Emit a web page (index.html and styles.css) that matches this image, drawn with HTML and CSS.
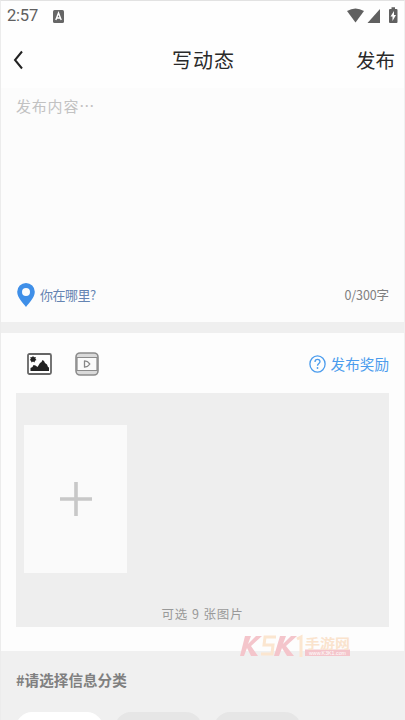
FILE: index.html
```html
<!DOCTYPE html>
<html lang="zh-CN">
<head>
<meta charset="utf-8">
<title>写动态</title>
<link rel="stylesheet" href="styles.css">
</head>
<body>
<main class="screen">
  <header class="status">
    <span class="clock">2:57</span>
    <svg class="keyboard" width="11" height="13" viewBox="0 0 11 13"><rect width="11" height="13" rx="1.5" fill="#666"/><path d="M2.8 10 5.5 3l2.7 7M3.7 8h3.6" fill="none" stroke="#fff" stroke-width="1.4"/></svg>
    <svg class="signals" width="52" height="18" viewBox="0 0 52 18"><path d="M0 4Q8.500-1 17 4L8.500 15.500Z" fill="#606060"/><path d="M20.500 16 33 2v14Z" fill="#606060"/><path d="M43 2h1.500V.3h3.500V2h1.500q1 0 1 1v12q0 1-1 1H43q-1 0-1-1V3q0-1 1-1Z" fill="#606060"/><path d="M47 4 43.500 9.500h2V14L49 8h-2Z" fill="#fff"/></svg>
  </header>
  <nav class="topbar">
    <svg class="back" width="12" height="20" viewBox="0 0 12 20"><path d="M10 1.500 3 10l7 8.500" fill="none" stroke="#222" stroke-width="2"/></svg>
    <h1 class="title">写动态</h1>
    <span class="publish">发布</span>
  </nav>
  <section class="editor">
    <p class="placeholder">发布内容<span class="dots">⋯</span></p>
    <div class="meta">
      <svg class="pin" width="18" height="24" viewBox="0 0 18 24"><path fill-rule="evenodd" d="M9 0a8.800 8.800 0 0 1 8.800 8.800C17.800 15 11.500 20.500 9 24 6.500 20.500.2 15 .2 8.800A8.800 8.800 0 0 1 9 0Zm0 5a4 4 0 1 0 0 8 4 4 0 0 0 0-8Z" fill="#3f8fe8"/></svg>
      <span class="where">你在哪里?</span>
      <span class="count">0/300字</span>
    </div>
  </section>
  <section class="media">
    <div class="tools">
      <svg class="photo" width="25" height="22" viewBox="0 0 25 22"><rect x="1" y="1" width="23" height="20" rx="1.500" fill="#fff" stroke="#666" stroke-width="1.800"/><path d="m6 3 1 1.200 1.800-.2-.4 1.700L9.500 7 8 7.700 7.500 9.500 6 8.500 4.500 9.500 4 7.700 2.800 7l1-1.300L3.300 4l1.700.2Z" fill="#222"/><path d="M3.500 18v-3l2-1 1-2 2 .5 2 1.500 2.500-4 1.500-1 1-2 1.500 1 1 2 2 1.500 1 2.500 1 .5V18Z" fill="#222"/></svg>
      <svg class="video" width="24" height="24" viewBox="0 0 24 24"><rect x="1" y="1" width="22" height="22" rx="4" fill="#dadada" stroke="#8c8c8c" stroke-width="1.600"/><path d="M2 5.500h20v13H2Z" fill="#fbfbfb" stroke="#8c8c8c" stroke-width="1.200"/><path d="M9.500 8.800v6.400l3-.8 2.300-2.400-2.300-2.400Z" fill="none" stroke="#888" stroke-width="1.300" stroke-linejoin="round"/></svg>
      <svg class="help" width="17" height="18" viewBox="0 0 17 18"><ellipse cx="8.500" cy="9" rx="7.600" ry="8.200" fill="none" stroke="#4b9ced" stroke-width="1.300"/><path d="M6 7q0-2.600 2.500-2.600T11 6.800c0 1.700-2.500 1.800-2.500 4" fill="none" stroke="#4b9ced" stroke-width="1.300"/><circle cx="8.500" cy="13" r=".9" fill="#4b9ced"/></svg>
      <span class="reward">发布奖励</span>
    </div>
    <div class="gallery">
      <div class="add"><svg width="32" height="36" viewBox="0 0 32 36"><path d="M16 1v34M0 18h32" stroke="#c8c8c8" stroke-width="3.600"/></svg></div>
      <p class="hint">可选 9 张图片</p>
    </div>
  </section>
  <section class="category">
    <h2 class="heading">#请选择信息分类</h2>
    <div class="pills">
      <span class="pill selected">公告</span>
      <span class="pill">小百科</span>
      <span class="pill">女团</span>
    </div>
  </section>
  <svg class="watermark" width="112" height="24" viewBox="0 0 112 24"><g fill="#f4c5cb"><path d="M5 2h6L8 10 16 2h6L11 12l7 10h-7L7 14 4 22H0Z"/><path d="M40 2h6l-3 8 8-8h6L46 12l8 10h-7l-5-8-3 8h-5Z"/><rect x="65" y="15.500" width="45" height="6.500"/></g><path d="M36 3H25l-1 8h9l-1 9H21M57 5l4-2v20" fill="none" stroke="#fbe6d0" stroke-width="3"/><text x="65" y="13.500" class="brand" textLength="45" lengthAdjust="spacingAndGlyphs">手游网</text><text x="69" y="20.800" class="url" textLength="37" lengthAdjust="spacingAndGlyphs">www.K3K1.com</text></svg>
</main>
</body>
</html>
```
FILE: styles.css
```css
* { box-sizing: border-box; }
body { margin: 0; background: #fefefe; font-family: "Noto Sans CJK SC", sans-serif; }
h1, h2, p { margin: 0; font-weight: 400; }
svg { display: block; flex: none; }
.screen { position: relative; width: 405px; height: 720px; overflow: hidden; border-top: 1px solid #e2e2e2; border-left: 1px solid #ececec; border-right: 1px solid #f0f0f0; }
.status { display: flex; align-items: center; height: 29px; padding: 1px 5px 0 6px; color: #606060; }
.clock { width: 46px; font: 16.500px/28px Roboto, sans-serif; letter-spacing: -0.2px; }
.signals { margin-left: auto; }
.topbar { display: grid; grid-template-columns: 1fr auto 1fr; align-items: center; height: 58px; padding: 1px 9px 0 11px; color: #292929; }
.title { font-size: 20px; line-height: 30px; letter-spacing: 1px; }
.publish { justify-self: end; font-size: 19.500px; line-height: 30px; }
.editor { display: flex; flex-direction: column; height: 234px; padding: 6px 15px 15px; background: #fcfcfc; }
.placeholder { font-size: 15px; line-height: 23px; letter-spacing: 0.8px; color: #c2c2c2; }
.meta { display: flex; align-items: center; margin-top: auto; }
.pin { margin: 0 5px 0 1px; }
.where { font-size: 13px; line-height: 20px; letter-spacing: -0.5px; color: #6584b2; }
.count { margin-left: auto; font-size: 12.500px; line-height: 20px; letter-spacing: -0.1px; color: #808080; }
.media { height: 329px; border-top: 11px solid #efefef; padding: 0 15px; background: #fdfdfd; }
.tools { display: flex; align-items: center; height: 60px; padding: 1px 0 0 11px; }
.video { margin-left: 23px; }
.help { margin-left: auto; }
.reward { margin-left: 5px; font-size: 14.600px; line-height: 22px; color: #4b9ced; }
.gallery { display: flex; flex-direction: column; height: 234px; padding: 32px 8px 2px; background: #eee; }
.add { display: grid; place-items: center; width: 103px; height: 148px; background: #fafafa; }
.hint { margin-top: auto; text-align: center; font-size: 12.500px; line-height: 22px; letter-spacing: 0.9px; color: #999; }
.category { height: 80px; padding: 17px 15px 0; background: #f0f0f0; }
.heading { font-size: 14.600px; font-weight: 700; line-height: 24px; color: #808080; }
.pills { display: flex; gap: 12px; margin-top: 20px; }
.pill { width: 87px; height: 32px; border-radius: 16px; background: #e6e6e6; color: #bbb; text-align: center; font-size: 14px; line-height: 29px; }
.selected { background: #fff; color: #888; }
.watermark { position: absolute; left: 239px; top: 633px; }
.brand { font-size: 13px; font-weight: 700; fill: #fae3cd; }
.url { font: 5px "Liberation Sans", sans-serif; fill: #fff; }
```
